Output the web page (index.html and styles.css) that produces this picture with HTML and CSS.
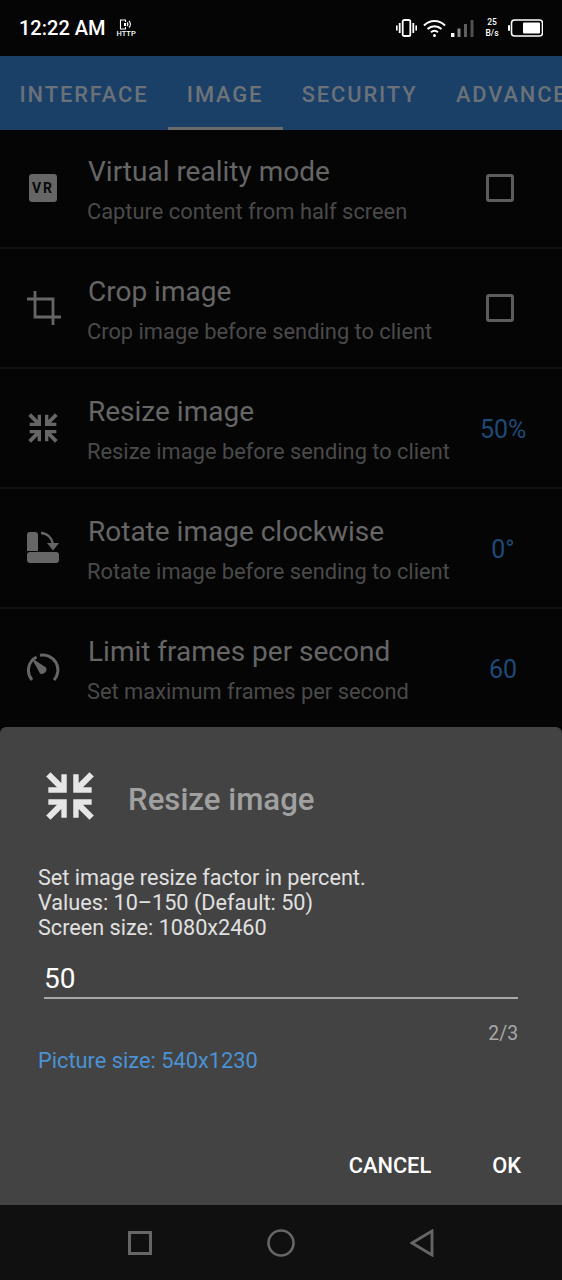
FILE: index.html
```html
<!DOCTYPE html>
<html lang="en">

<head>
    <meta charset="UTF-8">
    <title>Resize image</title>
    <meta name="viewport" content="width=device-width, initial-scale=1.0">
    <link rel="stylesheet" href="styles.css">
</head>

<body>
    <div class="screen">
        <div class="status-bar">
            <span class="clock">12:22 AM</span>
            <div class="http-icon">
                <svg width="16" height="11" viewBox="0 0 16 11" fill="none" stroke="#fff">
                    <path d="M7.5 3V1H2.5V10H7.5V8" stroke-width="1.1" />
                    <path d="M9 3.5a2.5 2.5 0 0 1 0 3.5M11 2a4.5 4.5 0 0 1 0 6.5" stroke-width="1.1" />
                    <rect x="6" y="4" width="2" height="3" fill="#fff" stroke="none" />
                </svg>
                <span>HTTP</span>
            </div>
            <div class="status-right">
                <svg class="vibrate" width="21" height="18" viewBox="0 0 21 18" fill="#fff">
                    <rect x="6.7" y="1" width="7.6" height="16" rx="1.6" fill="none" stroke="#fff" stroke-width="1.8" />
                    <rect x="0" y="6.5" width="1.6" height="5" />
                    <rect x="2.8" y="4" width="1.8" height="10" />
                    <rect x="16.4" y="4" width="1.8" height="10" />
                    <rect x="19.4" y="6.5" width="1.6" height="5" />
                </svg>
                <svg width="23" height="19" viewBox="0 0 23 19" fill="none" stroke="#fff" stroke-width="2">
                    <path d="M1 6.5C7 0.5 16 0.5 22 6.5" />
                    <path d="M4.5 10C8.5 6.3 14.5 6.3 18.5 10" />
                    <path d="M8 13.2C10 11.5 13 11.5 15 13.2" />
                    <circle cx="11.5" cy="16.6" r="1.5" fill="#fff" stroke="none" />
                </svg>
                <svg class="signal" width="23" height="17" viewBox="0 0 23 17">
                    <rect x="0" y="13" width="3.4" height="4" fill="#fff" />
                    <rect x="6.5" y="8.5" width="3" height="8.5" fill="#8a8a8a" />
                    <rect x="13" y="4" width="3" height="13" fill="#5e5e5e" />
                    <rect x="19.5" y="0" width="3" height="17" fill="#505050" />
                </svg>
                <div class="speed"><span>25</span><span>B/s</span></div>
                <svg width="35" height="18" viewBox="0 0 35 18">
                    <rect x="0" y="6" width="2" height="6" rx="1" fill="#fff" />
                    <rect x="3.5" y="1" width="31" height="16" rx="3" fill="none" stroke="#fff" stroke-width="1.6" />
                    <rect x="15" y="3.5" width="17" height="11" rx="1" fill="#fff" />
                </svg>
            </div>
        </div>

        <div class="tabs">
            <span class="tab">INTERFACE</span>
            <span class="tab active">IMAGE</span>
            <span class="tab">SECURITY</span>
            <span class="tab">ADVANCED</span>
        </div>

        <div class="list">
            <div class="row">
                <div class="row-icon">
                    <div class="vr-badge">VR</div>
                </div>
                <div class="row-text">
                    <div class="row-title">Virtual reality mode</div>
                    <div class="row-sub">Capture content from half screen</div>
                </div>
                <div class="checkbox"></div>
            </div>
            <div class="row">
                <div class="row-icon">
                    <svg width="36" height="36" viewBox="0 0 36 36" fill="none" stroke="#666" stroke-width="2.8">
                        <path d="M2 9H28V28" />
                        <path d="M10 1V27H36" />
                        <path d="M28 27V35" />
                    </svg>
                </div>
                <div class="row-text">
                    <div class="row-title">Crop image</div>
                    <div class="row-sub">Crop image before sending to client</div>
                </div>
                <div class="checkbox"></div>
            </div>
            <div class="row">
                <div class="row-icon">
                    <svg width="32" height="32" viewBox="0 0 48 48" fill="#666">
                        <path d="M2 6L6 2L16 12V4H21V21H4V16H12Z" />
                        <path d="M46 6L42 2L32 12V4H27V21H44V16H36Z" />
                        <path d="M2 42L6 46L16 36V44H21V27H4V32H12Z" />
                        <path d="M46 42L42 46L32 36V44H27V27H44V32H36Z" />
                    </svg>
                </div>
                <div class="row-text">
                    <div class="row-title">Resize image</div>
                    <div class="row-sub">Resize image before sending to client</div>
                </div>
                <div class="row-value">50%</div>
            </div>
            <div class="row">
                <div class="row-icon">
                    <svg width="34" height="34" viewBox="0 0 34 34" fill="#666">
                        <path d="M1 20V4a3 3 0 0 1 3-3h5a3 3 0 0 1 3 3v16Z" />
                        <rect x="1" y="21" width="32" height="11" rx="3" />
                        <path d="M15 2C21 2 26 7 27 13" fill="none" stroke="#666" stroke-width="2.4" />
                        <path d="M21 12H33L27 19.5Z" />
                    </svg>
                </div>
                <div class="row-text">
                    <div class="row-title">Rotate image clockwise</div>
                    <div class="row-sub">Rotate image before sending to client</div>
                </div>
                <div class="row-value">0°</div>
            </div>
            <div class="row">
                <div class="row-icon">
                    <svg width="34" height="30" viewBox="0 0 34 30" fill="none" stroke="#666" stroke-width="3">
                        <path d="M6 27A15 15 0 0 1 10.5 4" />
                        <path d="M14 2.2A15 15 0 0 1 28 27" />
                        <path d="M5.5 5L20 14.5A4.5 4.5 0 0 1 14 20.5Z" fill="#666" stroke="none" />
                    </svg>
                </div>
                <div class="row-text">
                    <div class="row-title">Limit frames per second</div>
                    <div class="row-sub">Set maximum frames per second</div>
                </div>
                <div class="row-value">60</div>
            </div>
        </div>

        <div class="dialog">
            <div class="dialog-head">
                <svg width="52" height="52" viewBox="0 0 48 48" fill="#e6e6e6">
                    <path d="M2 6L6 2L16 12V4H21V21H4V16H12Z" />
                    <path d="M46 6L42 2L32 12V4H27V21H44V16H36Z" />
                    <path d="M2 42L6 46L16 36V44H21V27H4V32H12Z" />
                    <path d="M46 42L42 46L32 36V44H27V27H44V32H36Z" />
                </svg>
                <h2>Resize image</h2>
            </div>
            <p class="dialog-msg">Set image resize factor in percent.<br>Values: 10–150 (Default: 50)<br>Screen size: 1080x2460</p>
            <div class="field">50</div>
            <div class="counter">2/3</div>
            <div class="picture-size">Picture size: 540x1230</div>
            <div class="actions">
                <span>CANCEL</span>
                <span>OK</span>
            </div>
        </div>

        <div class="nav-bar">
            <svg width="24" height="24" viewBox="0 0 24 24" fill="none" stroke="#666" stroke-width="3">
                <rect x="1.5" y="1.5" width="21" height="21" />
            </svg>
            <svg width="28" height="28" viewBox="0 0 28 28" fill="none" stroke="#666" stroke-width="2.6">
                <circle cx="14" cy="14" r="12.5" />
            </svg>
            <svg width="24" height="28" viewBox="0 0 24 28" fill="none" stroke="#666" stroke-width="2.8" stroke-linejoin="miter">
                <path d="M22 2V26L2 14Z" />
            </svg>
        </div>
    </div>
</body>

</html>
```
FILE: styles.css
```css
* {
    box-sizing: border-box;
}

body {
    margin: 0;
    background: #000;
    font-family: Roboto, 'Liberation Sans', sans-serif;
}

.screen {
    width: 562px;
    height: 1280px;
    display: flex;
    flex-direction: column;
    overflow: hidden;
}

.status-bar {
    height: 56px;
    flex: none;
    display: flex;
    align-items: center;
    padding: 0 19px;
    background: #050505;
    color: #fff;
}

.clock {
    font-size: 20px;
    font-weight: 500;
}

.http-icon {
    display: flex;
    flex-direction: column;
    align-items: center;
    margin-left: 11px;
    font-size: 7.5px;
    line-height: 7px;
    font-weight: 500;
}

.status-right {
    margin-left: auto;
    display: flex;
    align-items: center;
}

.status-right .signal {
    margin-left: 5px;
}

.status-right .vibrate {
    margin-right: 6px;
}

.speed {
    display: flex;
    flex-direction: column;
    align-items: center;
    width: 16px;
    margin-left: 10px;
    margin-right: 8px;
    font-size: 8.5px;
    line-height: 11px;
    font-weight: 500;
}

.tabs {
    height: 74px;
    flex: none;
    display: flex;
    background: #1b4068;
    color: #6a7178;
    font-size: 21.85px;
    font-weight: 500;
    letter-spacing: 1.9px;
    white-space: nowrap;
    overflow: hidden;
}

.tab {
    padding: 0 19.2px;
    line-height: 78px;
}

.tab:first-child {
    padding-left: 19.5px;
}

.tab.active {
    border-bottom: 3px solid #6b6b6b;
    color: #6e7378;
}

.list {
    flex: 1;
    min-height: 0;
    overflow: hidden;
    background: #050505;
}

.row {
    height: 120px;
    display: flex;
    align-items: center;
    border-bottom: 2px solid #101010;
}

.list .row:first-child {
    margin-top: -1px;
}

.row-icon {
    width: 87px;
    flex: none;
    display: flex;
    justify-content: center;
    padding-right: 1px;
}

.vr-badge {
    width: 28px;
    height: 28px;
    border-radius: 3px;
    background: #666;
    color: #0a0a0a;
    font-size: 14px;
    font-weight: 700;
    letter-spacing: 2px;
    line-height: 28px;
    text-align: center;
}

.row-text {
    flex: 1;
    min-width: 0;
    padding-top: 5px;
}

.row-title {
    margin-left: 1px;
    font-size: 28px;
    line-height: 34px;
    color: #666;
    white-space: nowrap;
}

.row-sub {
    margin-top: 9px;
    font-size: 21.85px;
    line-height: 28px;
    color: #4a4a4a;
    white-space: nowrap;
}

.checkbox {
    width: 28px;
    height: 28px;
    margin-right: 48px;
    border: 3px solid #5c5c5c;
    border-radius: 3px;
}

.row-value {
    width: 46px;
    margin-right: 36px;
    padding-top: 2px;
    font-size: 25px;
    color: #1f4a77;
    text-align: center;
}

.dialog {
    height: 478px;
    flex: none;
    padding: 0 38px;
    background: #434343;
    border-radius: 6px 6px 0 0;
    color: #e0e0e0;
}

.dialog-head {
    height: 138px;
    display: flex;
    align-items: center;
    padding-left: 6px;
}

.dialog-head h2 {
    margin: 6px 0 0 32px;
    font-size: 31.2px;
    font-weight: 500;
    color: #a0a0a0;
}

.dialog-msg {
    margin: 0;
    font-size: 21.65px;
    line-height: 25px;
}

.field {
    margin: 12px 6px 0;
    height: 47px;
    border-bottom: 2px solid #a8a8a8;
    font-size: 28px;
    line-height: 54px;
    color: #fff;
}

.counter {
    margin: 24px 6px 0 0;
    text-align: right;
    font-size: 19.3px;
    line-height: 22px;
    color: #a8a8a8;
}

.picture-size {
    margin-top: 3px;
    font-size: 21.8px;
    line-height: 25px;
    color: #4b92d4;
}

.actions {
    display: flex;
    justify-content: flex-end;
    gap: 61px;
    margin-top: 80px;
    margin-right: 3px;
    font-size: 21.8px;
    line-height: 25px;
    font-weight: 500;
    color: #fff;
}

.nav-bar {
    height: 75px;
    flex: none;
    display: flex;
    align-items: center;
    justify-content: center;
    gap: 115px;
    background: #101010;
}
```
